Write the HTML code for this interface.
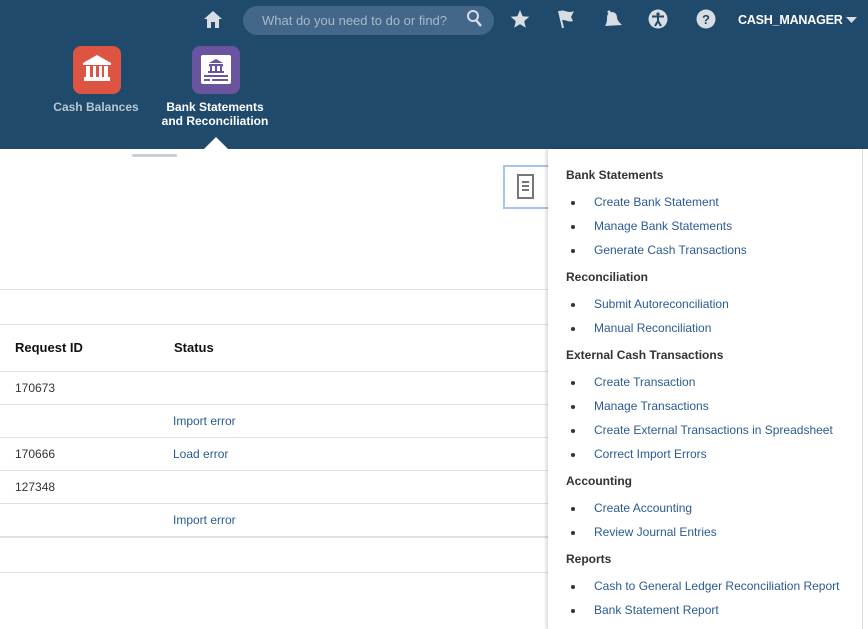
<!DOCTYPE html>
<html><head><meta charset="utf-8"><style>
*{margin:0;padding:0;box-sizing:border-box}
body{width:868px;height:622px;overflow:hidden;background:#fff;font-family:"Liberation Sans",Arial,sans-serif;position:relative}
.hdr{position:absolute;left:0;top:0;width:868px;height:149px;background:#1f4a6b}
.abs{position:absolute}
.search{position:absolute;left:243px;top:6px;width:251px;height:29px;border-radius:15px;background:#43678a;color:#a9b8c6;font-size:13px;line-height:29px;padding-left:19px}
.tile{position:absolute;width:48px;height:48px;border-radius:8px}
.lbl{position:absolute;font-size:12px;font-weight:bold;text-align:center;line-height:14px}
.hl{position:absolute;left:0;height:1px;background:#dde3e8;width:548px}
.td{position:absolute;font-size:12px;color:#333}
.lk{color:#2a5b93}
.panel{position:absolute;left:548px;top:149px;width:315px;height:480px;background:#fff;box-shadow:-2px 0 3px rgba(0,0,0,.15);border-right:1px solid #ddd}
.panel h4{position:absolute;left:18px;font-size:12px;color:#333;font-weight:bold}
.panel .it{position:absolute;left:46px;font-size:12px;color:#2a5b93}
.panel .it:before{content:"";position:absolute;left:-23px;top:6px;width:4px;height:4px;border-radius:2px;background:#333}
</style></head><body>
<div class="hdr"></div>
<svg class="abs" style="left:203px;top:10px" width="20" height="19" viewBox="0 0 20 19"><path d="M10 1L1 9h3v9h4v-6h4v6h4V9h3z" fill="#d8dde3"/></svg>
<div class="search">What do you need to do or find?</div>
<svg class="abs" style="left:465px;top:9px" width="20" height="20" viewBox="0 0 20 20"><circle cx="8" cy="7" r="5" stroke="#d8dde3" stroke-width="2" fill="none"/><path d="M11 11l5 6" stroke="#d8dde3" stroke-width="2.5"/></svg>
<svg class="abs" style="left:510px;top:9px" width="20" height="20" viewBox="0 0 20 20"><path d="M10 1l2.6 6.2 6.7.5-5.1 4.4 1.6 6.6L10 15.1 4.2 18.7l1.6-6.6L.7 7.7l6.7-.5z" fill="#d8dde3"/></svg>
<svg class="abs" style="left:556px;top:8px" width="22" height="22" viewBox="0 0 22 22"><path d="M3 3l4 17" stroke="#d8dde3" stroke-width="2"/><path d="M4 3c4-2 8 3 14 0l-3 6 2 4c-5 2-9-3-12 0z" fill="#d8dde3"/></svg>
<svg class="abs" style="left:601px;top:8px" width="22" height="22" viewBox="0 0 22 22"><path d="M4 18c2-3 2-6 2-9a5 5 0 0 1 10 0c0 3 2 5 5 8z" fill="#d8dde3"/><circle cx="8" cy="4" r="1.5" fill="#d8dde3"/></svg>
<svg class="abs" style="left:648px;top:9px" width="20" height="20" viewBox="0 0 20 20"><circle cx="10" cy="10" r="9.5" fill="#d8dde3"/><circle cx="10" cy="5" r="1.6" fill="#1f4a6b"/><path d="M4 7.5h12M10 7.5v5M10 12l-3 5M10 12l3 5" stroke="#1f4a6b" stroke-width="2"/></svg>
<svg class="abs" style="left:696px;top:9px" width="20" height="20" viewBox="0 0 20 20"><circle cx="10" cy="10" r="9.5" fill="#d8dde3"/><text x="10" y="15" text-anchor="middle" font-family="Liberation Sans" font-weight="bold" font-size="13" fill="#1f4a6b">?</text></svg>
<div class="abs" style="left:738px;top:13px;color:#fff;font-size:12.5px;font-weight:bold;letter-spacing:-0.2px">CASH_MANAGER</div>
<svg class="abs" style="left:846px;top:17px" width="11" height="6"><path d="M0 0h11L5.5 6z" fill="#d8dde3"/></svg>
<div class="tile" style="left:73px;top:46px;background:#dd5443"></div>
<svg class="abs" style="left:81px;top:54px" width="32" height="32" viewBox="0 0 32 32"><path d="M16 1L2 9v2h28V9z" fill="#fff"/><rect x="5" y="12" width="4" height="11" fill="#fff"/><rect x="12" y="12" width="3" height="11" fill="#fff"/><rect x="18" y="12" width="3" height="11" fill="#fff"/><rect x="23" y="12" width="4" height="11" fill="#fff"/><rect x="3" y="23" width="26" height="4" fill="#fff"/></svg>
<div class="tile" style="left:192px;top:46px;background:#6a54a0"></div>
<div class="abs" style="left:201px;top:55px;width:30px;height:29px;background:#fff;border-radius:2px"></div>
<svg class="abs" style="left:201px;top:55px" width="30" height="29" viewBox="0 0 30 29"><path d="M15 4l-7 4h14z" fill="#6a54a0"/><rect x="8" y="9" width="14" height="2" fill="#6a54a0"/><rect x="9" y="11" width="2" height="5" fill="#6a54a0"/><rect x="14" y="11" width="2" height="5" fill="#6a54a0"/><rect x="19" y="11" width="2" height="5" fill="#6a54a0"/><rect x="7" y="16" width="16" height="2" fill="#6a54a0"/><rect x="3" y="20" width="24" height="2" fill="#6a54a0"/><rect x="3" y="24" width="6" height="2" fill="#6a54a0"/><rect x="11" y="24" width="16" height="2" fill="#6a54a0"/></svg>
<div class="lbl" style="left:46px;top:100px;width:100px;color:#b8c6d3">Cash Balances</div>
<div class="lbl" style="left:155px;top:100px;width:120px;color:#fff">Bank Statements<br>and Reconciliation</div>
<svg class="abs" style="left:203px;top:136px" width="26" height="14"><path d="M0 14L13 1l13 13z" fill="#fff"/></svg>
<div class="abs" style="left:132px;top:154px;width:45px;height:3px;background:#c9ced8;border-radius:2px"></div>
<div class="abs" style="left:503px;top:165px;width:46px;height:44px;border:2px solid #a7c4ee;border-right:none;background:#fff"></div>
<svg class="abs" style="left:516px;top:174px" width="20" height="26" viewBox="0 0 20 26"><rect x="2" y="1" width="15" height="23" fill="none" stroke="#777" stroke-width="2"/><path d="M6 8h7M6 12h7M6 16h7" stroke="#777" stroke-width="2"/></svg>
<div class="hl" style="top:289px"></div>
<div class="hl" style="top:324px"></div>
<div class="hl" style="top:371px"></div>
<div class="hl" style="top:404px"></div>
<div class="hl" style="top:437px"></div>
<div class="hl" style="top:470px"></div>
<div class="hl" style="top:503px"></div>
<div class="hl" style="top:536px;height:2px"></div>
<div class="hl" style="top:572px"></div>
<div class="td" style="left:15px;top:340px;font-weight:bold;font-size:13px;color:#111">Request ID</div>
<div class="td" style="left:174px;top:340px;font-weight:bold;font-size:13px;color:#111">Status</div>
<div class="td" style="left:15px;top:381px">170673</div>
<div class="td lk" style="left:173px;top:414px">Import error</div>
<div class="td" style="left:15px;top:447px">170666</div>
<div class="td lk" style="left:173px;top:447px">Load error</div>
<div class="td" style="left:15px;top:480px">127348</div>
<div class="td lk" style="left:173px;top:513px">Import error</div>
<div class="panel">
<h4 style="top:19px">Bank Statements</h4>
<div class="it" style="top:46px">Create Bank Statement</div>
<div class="it" style="top:70px">Manage Bank Statements</div>
<div class="it" style="top:94px">Generate Cash Transactions</div>
<h4 style="top:121px">Reconciliation</h4>
<div class="it" style="top:148px">Submit Autoreconciliation</div>
<div class="it" style="top:172px">Manual Reconciliation</div>
<h4 style="top:199px">External Cash Transactions</h4>
<div class="it" style="top:226px">Create Transaction</div>
<div class="it" style="top:250px">Manage Transactions</div>
<div class="it" style="top:274px">Create External Transactions in Spreadsheet</div>
<div class="it" style="top:298px">Correct Import Errors</div>
<h4 style="top:325px">Accounting</h4>
<div class="it" style="top:352px">Create Accounting</div>
<div class="it" style="top:376px">Review Journal Entries</div>
<h4 style="top:403px">Reports</h4>
<div class="it" style="top:430px">Cash to General Ledger Reconciliation Report</div>
<div class="it" style="top:454px">Bank Statement Report</div>
</div>
</body></html>
